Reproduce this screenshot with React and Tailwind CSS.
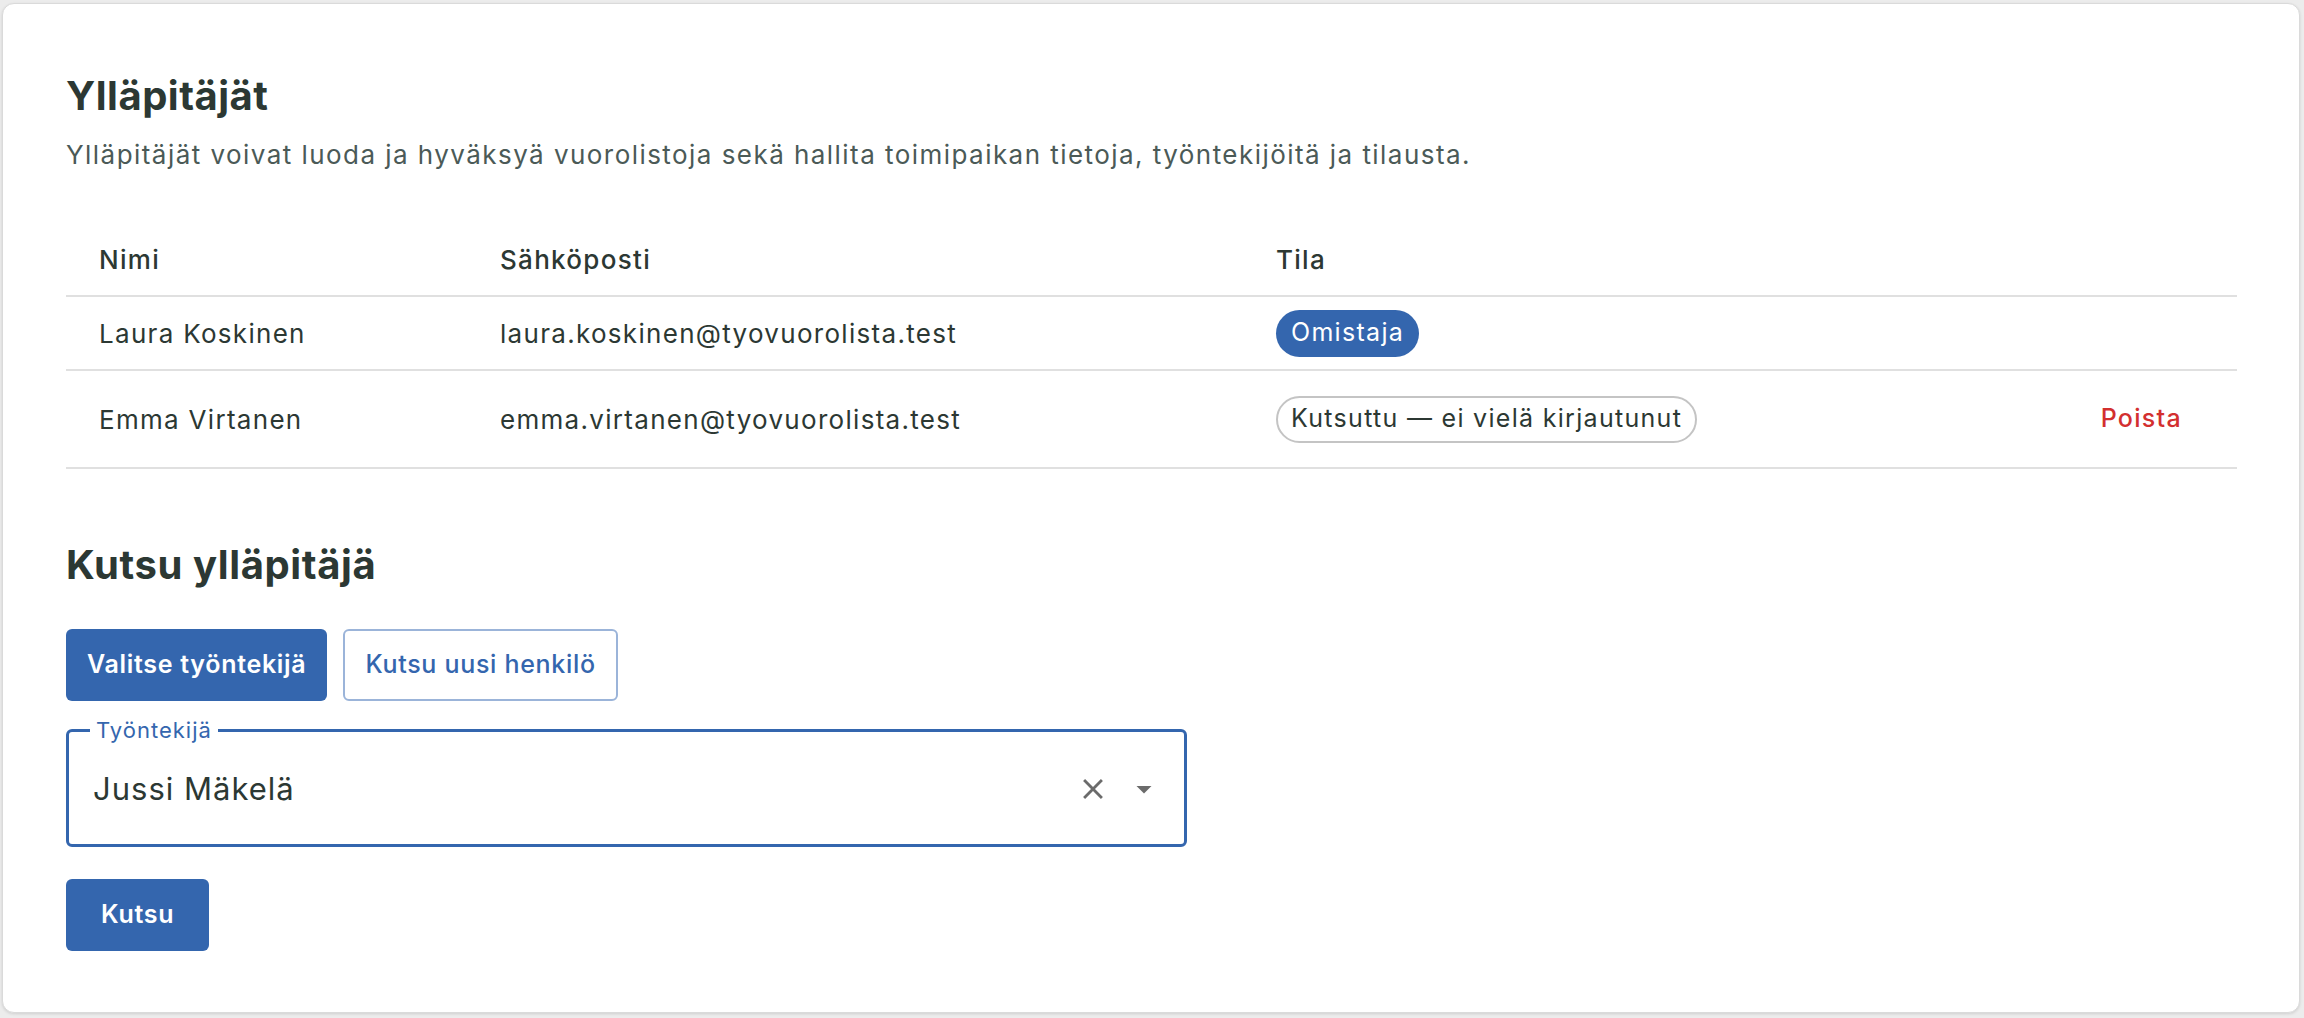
import React from 'react';

const rows = [
  { name: 'Laura Koskinen', email: 'laura.koskinen@tyovuorolista.test', owner: true },
  { name: 'Emma Virtanen', email: 'emma.virtanen@tyovuorolista.test', owner: false },
];

const App = () => {
  return (
    <div className="w-[2304px] h-[1018px] bg-[#ececec] pl-[2px] pr-[4px] pt-[3px] pb-[5px] font-['Inter',sans-serif] text-[#2c3833]">
      <div className="h-full rounded-[12px] border border-[#dadada] bg-white shadow-[0_1px_3px_rgba(0,0,0,0.12)] px-[63px] pt-[68px]">
        <h1 className="text-[40px] leading-[48px] font-bold tracking-[0.5px]">Ylläpitäjät</h1>
        <p className="mt-[17px] text-[26px] leading-[36px] tracking-[1.45px] text-[#4b5a57]">
          Ylläpitäjät voivat luoda ja hyväksyä vuorolistoja sekä hallita toimipaikan tietoja, työntekijöitä ja tilausta.
        </p>

        {/* Taulukko */}
        <div className="mt-[50px] w-[2171px] text-[26px] tracking-[1.3px]">
          <div className="flex items-center h-[74px] border-b-2 border-[#e0e0e0] font-medium">
            <div className="w-[401px] pl-[33px]">Nimi</div>
            <div className="w-[776px] pl-[33px]">Sähköposti</div>
            <div className="flex-1 pl-[33px]">Tila</div>
          </div>
          {rows.map((r) => (
            <div
              key={r.email}
              className={`flex items-center border-b-2 border-[#e0e0e0] ${r.owner ? 'h-[74px]' : 'h-[98px]'}`}
            >
              <div className="w-[401px] pl-[33px]">{r.name}</div>
              <div className="w-[776px] pl-[33px]">{r.email}</div>
              <div className="flex-1 pl-[33px]">
                {r.owner ? (
                  <span className="inline-flex items-center h-[47px] px-[15px] rounded-full bg-[#3466ae] text-white text-[25px]">
                    Omistaja
                  </span>
                ) : (
                  <span className="inline-flex items-center h-[47px] px-[13px] rounded-full border-2 border-[#c4c4c4] bg-white text-[25px]">
                    Kutsuttu — ei vielä kirjautunut
                  </span>
                )}
              </div>
              {!r.owner && (
                <button className="mr-[33px] px-[22px] py-[12px] rounded-[6px] text-[#d32f2f] text-[25px] font-medium">
                  Poista
                </button>
              )}
            </div>
          ))}
        </div>

        <h2 className="mt-[72px] text-[40px] leading-[48px] font-bold tracking-[0.6px]">Kutsu ylläpitäjä</h2>

        <div className="mt-[40px] flex gap-[16px]">
          <button className="h-[72px] px-[21px] rounded-[6px] bg-[#3466ae] text-white text-[25px] tracking-[0.7px] font-semibold">
            Valitse työntekijä
          </button>
          <button className="h-[72px] px-[20px] rounded-[6px] border-2 border-[#9bb4d9] bg-white text-[#3466ae] text-[25px] tracking-[0.7px] font-medium">
            Kutsu uusi henkilö
          </button>
        </div>

        {/* Työntekijä-valinta */}
        <fieldset className="mt-[18px] w-[1121px] h-[128px] rounded-[6px] border-[3px] border-[#3466ae] pl-[24px] pr-[22px]">
          <legend className="ml-[-3px] px-[6px] text-[22px] leading-[22px] tracking-[1px] text-[#3466ae]">Työntekijä</legend>
          <div className="flex items-center h-[96px]">
            <span className="flex-1 text-[31px] tracking-[1px] text-[#2c3833]">Jussi Mäkelä</span>
            <svg width="34" height="34" viewBox="0 0 24 24" className="text-[#6b6b6b]">
              <path
                d="M19 6.41 17.59 5 12 10.59 6.41 5 5 6.41 10.59 12 5 17.59 6.41 19 12 13.41 17.59 19 19 17.59 13.41 12z"
                fill="currentColor"
              />
            </svg>
            <svg width="36" height="36" viewBox="0 0 24 24" className="ml-[16px] text-[#6b6b6b]">
              <path d="M7 10l5 5 5-5z" fill="currentColor" />
            </svg>
          </div>
        </fieldset>

        <button className="mt-[32px] h-[72px] px-[35px] rounded-[6px] bg-[#3466ae] text-white text-[25px] tracking-[0.7px] font-semibold">
          Kutsu
        </button>
      </div>
    </div>
  );
};

export default App;
